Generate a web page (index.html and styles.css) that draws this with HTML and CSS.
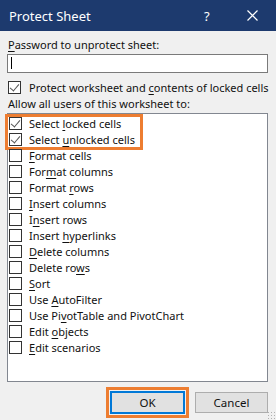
FILE: index.html
```html
<!DOCTYPE html>
<html lang="en">
<head>
  <meta charset="UTF-8">
  <title>Protect Sheet</title>
  <link rel="stylesheet" href="styles.css">
</head>
<body>
  <div class="dialog">
    <div class="titlebar">
      <span class="title">Protect Sheet</span>
      <span class="help">?</span>
      <span class="close">
        <svg width="11" height="11" viewBox="0 0 11 11"><path d="M0.5 0.5L10.5 10.5M10.5 0.5L0.5 10.5" stroke="#fff" stroke-width="1.2"/></svg>
      </span>
    </div>

    <div class="content">
      <div class="label"><u>P</u>assword to unprotect sheet:</div>
      <div class="input"><span class="caret"></span></div>

      <div class="row top-check">
        <span class="box checked"></span>
        <span>Protect worksheet and <u>c</u>ontents of locked cells</span>
      </div>

      <div class="label small">Allow all users of this worksheet to:</div>

      <div class="list">
        <div class="highlight"></div>
        <div class="row"><span class="box checked"></span><span>Select <u>l</u>ocked cells</span></div>
        <div class="row"><span class="box checked"></span><span>Select <u>u</u>nlocked cells</span></div>
        <div class="row"><span class="box"></span><span><u>F</u>ormat cells</span></div>
        <div class="row"><span class="box"></span><span>For<u>m</u>at columns</span></div>
        <div class="row"><span class="box"></span><span>Format <u>r</u>ows</span></div>
        <div class="row"><span class="box"></span><span><u>I</u>nsert columns</span></div>
        <div class="row"><span class="box"></span><span>I<u>n</u>sert rows</span></div>
        <div class="row"><span class="box"></span><span>Insert <u>h</u>yperlinks</span></div>
        <div class="row"><span class="box"></span><span><u>D</u>elete columns</span></div>
        <div class="row"><span class="box"></span><span>Delete ro<u>w</u>s</span></div>
        <div class="row"><span class="box"></span><span><u>S</u>ort</span></div>
        <div class="row"><span class="box"></span><span>Use <u>A</u>utoFilter</span></div>
        <div class="row"><span class="box"></span><span>Use Pi<u>v</u>otTable and PivotChart</span></div>
        <div class="row"><span class="box"></span><span>Edit <u>o</u>bjects</span></div>
        <div class="row"><span class="box"></span><span><u>E</u>dit scenarios</span></div>
      </div>

      <div class="buttons">
        <div class="ok-mark"><button class="btn default">OK</button></div>
        <button class="btn">Cancel</button>
      </div>
    </div>
    <div class="grip"></div>
  </div>
</body>
</html>
```

FILE: styles.css
```css
* {
  box-sizing: border-box;
}
body {
  margin: 0;
  font-family: "Noto Sans", "Open Sans", sans-serif;
  font-size: 11px;
  color: #111;
  background-color: #f0f0f0;
}
.dialog {
  position: relative;
  width: 276px;
  height: 420px;
  overflow: hidden;
  background-color: #f0f0f0;
}
.titlebar {
  height: 31px;
  background-color: #1d3a6e;
  color: #fff;
  display: flex;
  align-items: center;
}
.title {
  flex: 1;
  padding-left: 9px;
  font-size: 13px;
}
.help {
  width: 8px;
  font-size: 13px;
  margin-right: 35px;
}
.close {
  display: flex;
  align-items: center;
  margin-right: 18px;
}
.content {
  padding: 5px 8px 0 7px;
}
.label {
  height: 18px;
  line-height: 18px;
  padding-left: 1px;
}
.label.small {
  height: 17px;
  line-height: 16px;
}
u {
  text-decoration-thickness: 1px;
  text-underline-offset: 2px;
}
.input {
  height: 19px;
  background-color: #fff;
  border: 1px solid #7a7a7a;
  padding: 2px 3px;
}
.caret {
  display: block;
  width: 1px;
  height: 12px;
  background-color: #000;
}
.row {
  display: flex;
  align-items: center;
  height: 16px;
  gap: 7px;
  white-space: nowrap;
}
.top-check {
  margin-top: 6px;
  margin-bottom: 1px;
  padding-left: 1px;
  gap: 8px;
}
.box {
  flex: none;
  width: 13px;
  height: 13px;
  border: 1px solid #333;
  background-color: #fff;
  position: relative;
}
.box.checked::after {
  content: "";
  position: absolute;
  left: 3px;
  top: 0px;
  width: 4px;
  height: 8px;
  border: solid #555;
  border-width: 0 1.2px 1.2px 0;
  transform: rotate(40deg);
}
.list {
  position: relative;
  height: 269px;
  background-color: #fff;
  border: 1px solid #828790;
  padding: 1px 0 0 1px;
}
.highlight {
  position: absolute;
  left: -3px;
  top: 0px;
  width: 138px;
  height: 36px;
  border: 3px solid #ed7d31;
}
.buttons {
  display: flex;
  justify-content: flex-end;
  align-items: center;
  gap: 6px;
  margin-top: 5px;
}
.ok-mark {
  border: 3px solid #ed7d31;
  padding: 1px;
}
.btn {
  width: 73px;
  height: 21px;
  font-family: inherit;
  font-size: 11.5px;
  color: #111;
  background-color: #e1e1e1;
  border: 1px solid #adadad;
  padding: 0;
}
.btn.default {
  width: 75px;
  height: 23px;
  border: 2px solid #0078d7;
}
.grip {
  position: absolute;
  right: 1px;
  bottom: 1px;
  width: 8px;
  height: 8px;
  background-image: radial-gradient(#b0b0b0 0.8px, transparent 1px);
  background-size: 3px 3px;
}
```
